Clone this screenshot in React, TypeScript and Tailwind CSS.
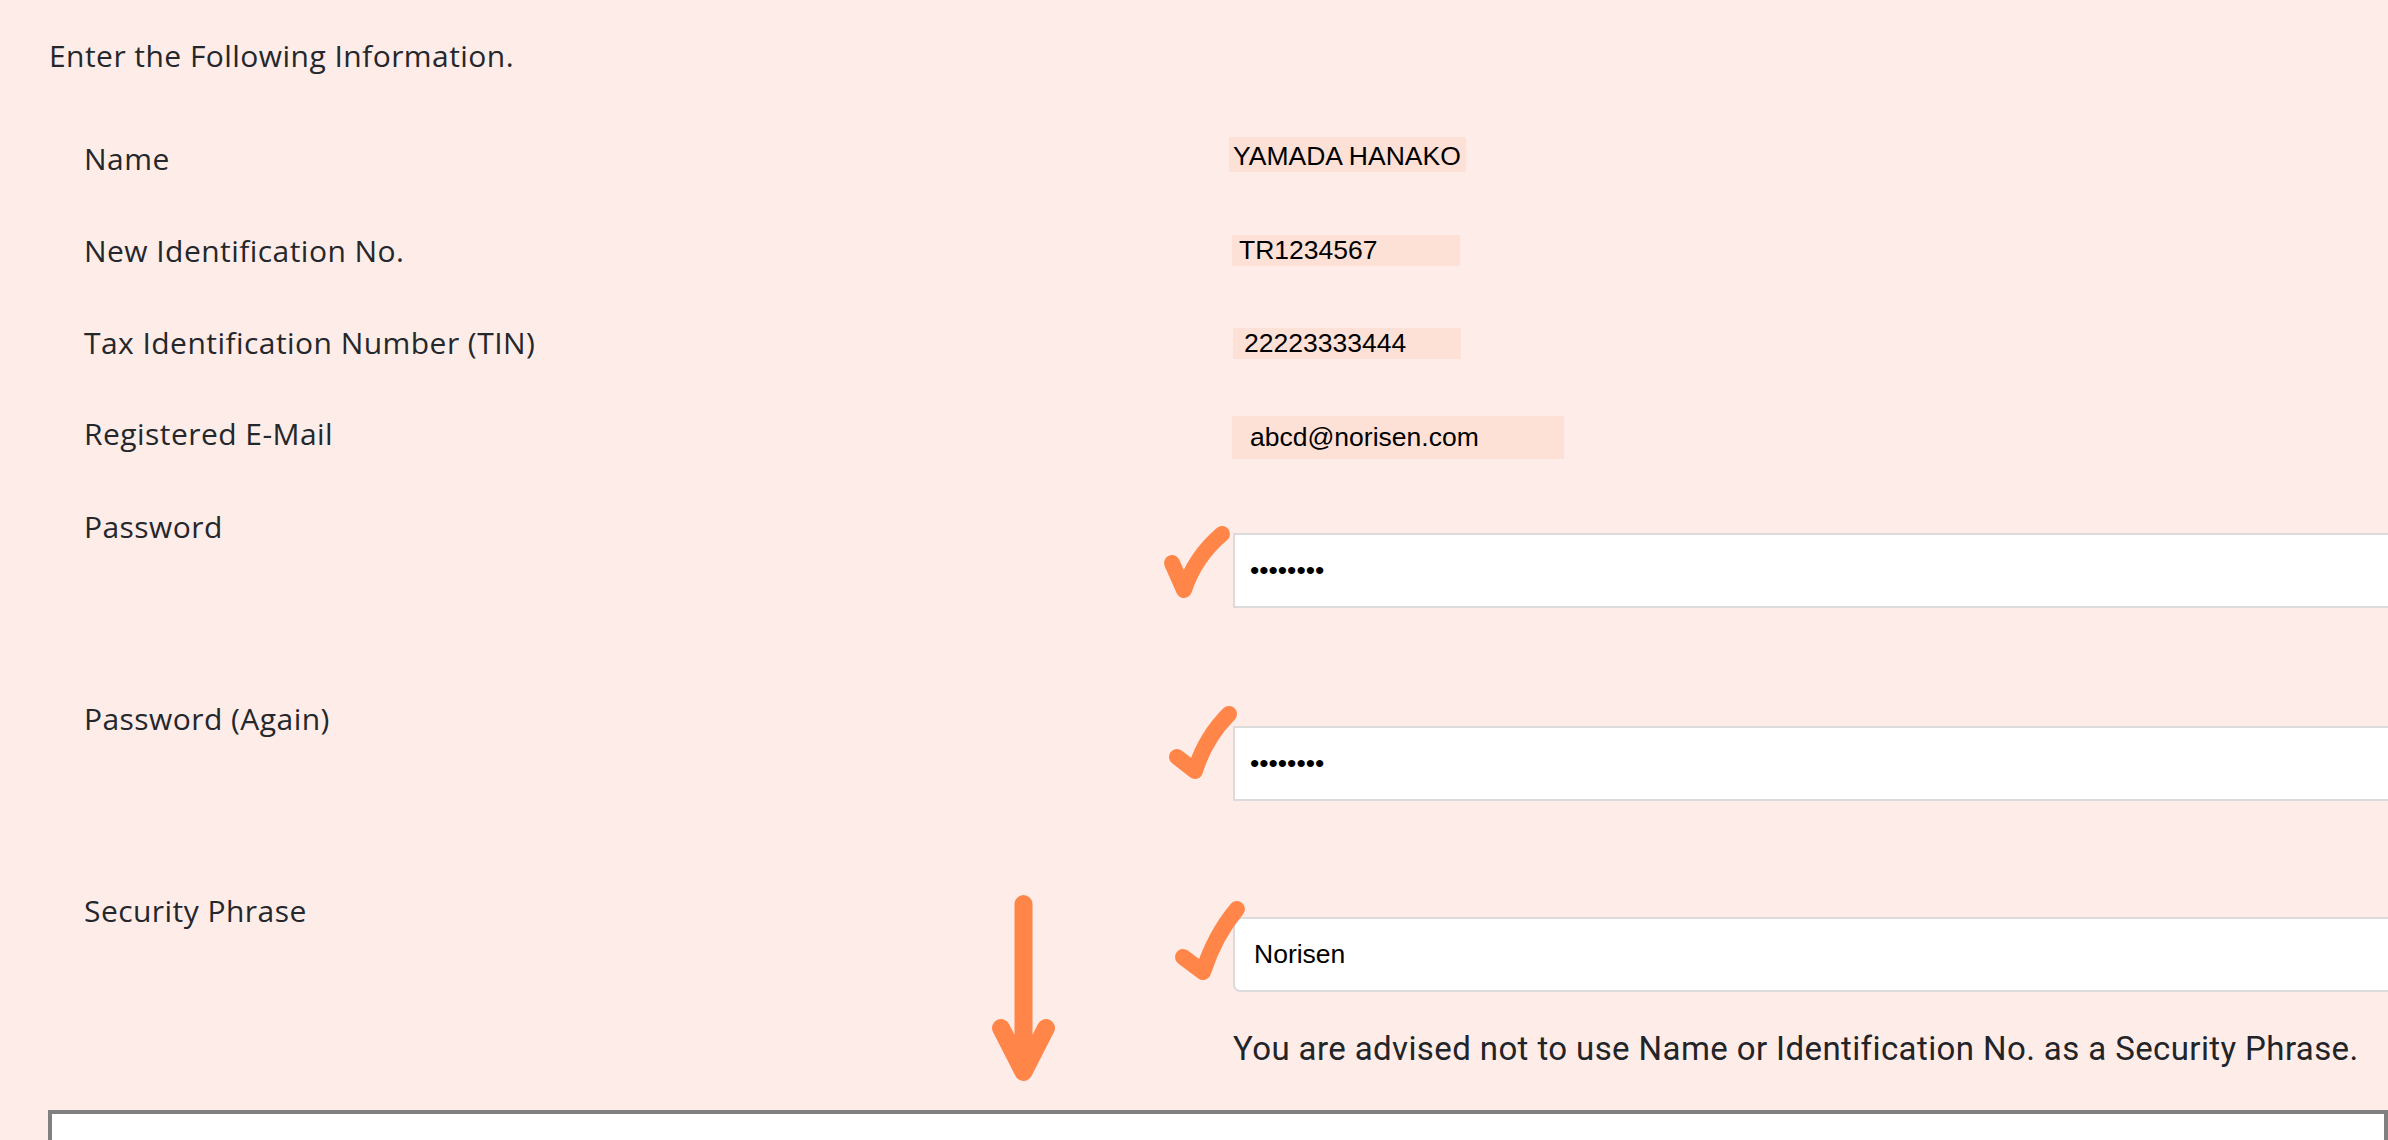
import React from 'react';

const labelFont = { fontFamily: '"Open Sans", "Liberation Sans", sans-serif' };

function ValueBox({ text, className }: { text: string; className: string }) {
    return (
        <div
            className={`bg-[#fde1d6] text-[26.5px] leading-[30px] text-black ${className}`}
            style={{ fontFamily: '"Liberation Sans", Arial, sans-serif' }}
        >
            {text}
        </div>
    );
}

function TextField({ value, rounded }: { value: string; rounded?: boolean }) {
    return (
        <input
            readOnly
            value={value}
            className={`h-[75px] w-[1220px] border-2 border-[#dbdbdb] bg-white text-[26.5px] text-black outline-none ${
                rounded ? 'rounded-l-[7px] pl-[19px]' : 'pl-[15px]'
            }`}
            style={{ fontFamily: '"Liberation Sans", Arial, sans-serif' }}
        />
    );
}

function Row({
    label,
    height,
    children,
}: {
    label: string;
    height: string;
    children: React.ReactNode;
}) {
    return (
        <div className={`flex items-start ${height}`}>
            <div
                className="w-[1145px] shrink-0 pl-[84px] text-[30px] leading-[36px] tracking-[0.45px] text-[#24272b]"
                style={labelFont}
            >
                {label}
            </div>
            <div className="flex flex-col">{children}</div>
        </div>
    );
}

function Marks() {
    // hand-drawn annotations on top of the form
    return (
        <svg
            className="pointer-events-none absolute left-0 top-0"
            width="2388"
            height="1140"
            viewBox="0 0 2388 1140"
            fill="none"
            stroke="#ff8648"
            strokeLinecap="round"
            strokeLinejoin="round"
        >
            <path strokeWidth={16} d="M1172 563 L1184 590 Q1195 557 1222 534" />
            <path strokeWidth={16} d="M1177 757 L1195 771 Q1205 738 1229 714" />
            <path strokeWidth={16} d="M1183 957 L1203 972 Q1215 935 1237 909" />
            <path strokeWidth={18} d="M1023.5 904 L1023.5 1070 M1001 1028 L1023.5 1072 L1046 1028" />
        </svg>
    );
}

export default function App() {
    return (
        <div className="relative h-[1140px] w-[2388px] overflow-hidden bg-[#feece8]">
            <div
                className="pl-[49px] pt-[38px] text-[30px] leading-[36px] tracking-[0.45px] text-[#24272b]"
                style={labelFont}
            >
                Enter the Following Information.
            </div>

            <div className="mt-[67px] flex flex-col">
                <Row label="Name" height="h-[92px]">
                    <div className="-mt-[4px] ml-[84px]">
                        <ValueBox text="YAMADA HANAKO" className="h-[35px] w-[237px] pl-[4px] pt-[4px]" />
                    </div>
                </Row>
                <Row label="New Identification No." height="h-[92px]">
                    <div className="ml-[87px] mt-[2px]">
                        <ValueBox text="TR1234567" className="h-[31px] w-[228px] pl-[7px]" />
                    </div>
                </Row>
                <Row label="Tax Identification Number (TIN)" height="h-[91px]">
                    <div className="ml-[88px] mt-[3px]">
                        <ValueBox text="22223333444" className="h-[31px] w-[228px] pl-[11px]" />
                    </div>
                </Row>
                <Row label="Registered E-Mail" height="h-[93px]">
                    <div className="ml-[87px]">
                        <ValueBox text="abcd@norisen.com" className="h-[43px] w-[332px] pl-[18px] pt-[6px]" />
                    </div>
                </Row>
                <Row label="Password" height="h-[192px]">
                    <div className="ml-[88px] mt-[24px]">
                        <TextField value="••••••••" />
                    </div>
                </Row>
                <Row label="Password (Again)" height="h-[192px]">
                    <div className="ml-[88px] mt-[25px]">
                        <TextField value="••••••••" />
                    </div>
                </Row>
                <Row label="Security Phrase" height="h-[217px]">
                    <div className="ml-[88px] mt-[24px]">
                        <TextField value="Norisen" rounded />
                    </div>
                    <p
                        className="ml-[88px] mt-[38px] whitespace-nowrap text-[33px] leading-[38px] tracking-[0.4px] text-[#222428]"
                        style={{ fontFamily: 'Roboto, "Liberation Sans", sans-serif' }}
                    >
                        You are advised not to use Name or Identification No. as a Security Phrase.
                    </p>
                </Row>
            </div>

            <div className="ml-[48px] h-[200px] border-4 border-[#808080] bg-white" />

            <Marks />
        </div>
    );
}
